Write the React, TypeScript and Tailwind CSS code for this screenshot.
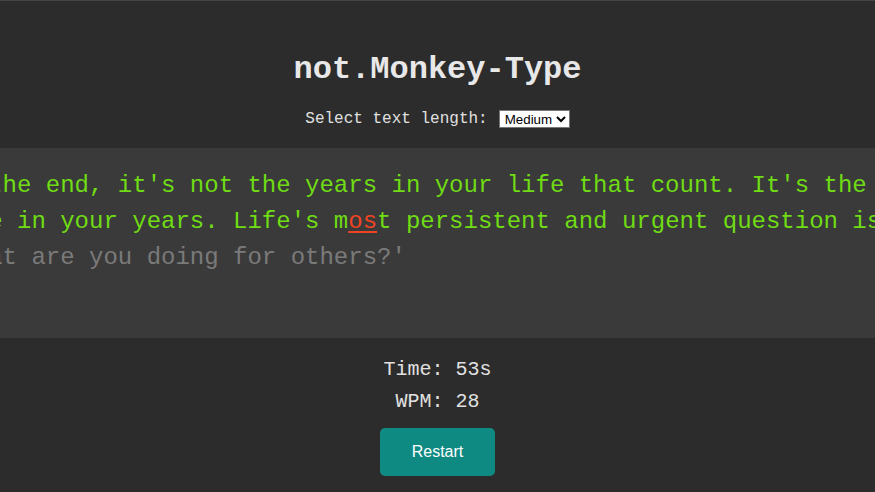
import React from "react";

export default function App() {
  const typedA =
    "In the end, it's not the years in your life that count. It's the life in your years. Life's m";
  const wrong = "os";
  const typedB = "t persistent and urgent question is, ";
  const rest = "'What are you doing for others?'";
  return (
    <div
      className="w-full h-[492px] overflow-hidden bg-[#2c2c2c] border-t border-[#444444] flex flex-col items-center font-['Liberation_Mono','Courier_New',monospace]"
    >
      <h1 className="mt-[49px] h-[40px] leading-[40px] text-[32px] font-bold text-[#e8e8e8]">
        not.Monkey-Type
      </h1>
      <div className="mt-[19px] h-[20px] flex items-center gap-[11px] text-[16px] text-[#e0e0e0]">
        <span className="leading-[20px]">Select text length:</span>
        <select
          defaultValue="medium"
          className="h-[18px] bg-white text-black border border-[#767676] text-[13.33px] font-['Liberation_Sans',Arial,sans-serif] leading-[16px] pl-[1px]"
        >
          <option value="short">Short</option>
          <option value="medium">Medium</option>
          <option value="long">Long</option>
        </select>
      </div>
      <div className="mt-[19px] w-full h-[190px] shrink-0 bg-[#3a3a3a] flex justify-center overflow-hidden py-5">
        <div className="w-[985px] shrink-0 text-left text-[24px] leading-[36px]">
          <span className="text-[#6fdc14]">{typedA}</span>
          <span className="text-[#ee4422] underline decoration-[#ee4422] decoration-2 underline-offset-[3px]">
            {wrong}
          </span>
          <span className="text-[#6fdc14]">{typedB}</span>
          <span className="text-[#7a7a7a]">{rest}</span>
        </div>
      </div>
      <div className="mt-[16px] h-[32px] leading-[32px] text-[20px] text-[#e0e0e0]">
        Time: 53s
      </div>
      <div className="h-[32px] leading-[32px] text-[20px] text-[#e0e0e0]">WPM: 28</div>
      <button className="mt-[10px] w-[115px] h-[48px] rounded-[5px] bg-[#0e8a82] text-white text-[16px] font-['Liberation_Sans',Arial,sans-serif]">
        Restart
      </button>
    </div>
  );
}
